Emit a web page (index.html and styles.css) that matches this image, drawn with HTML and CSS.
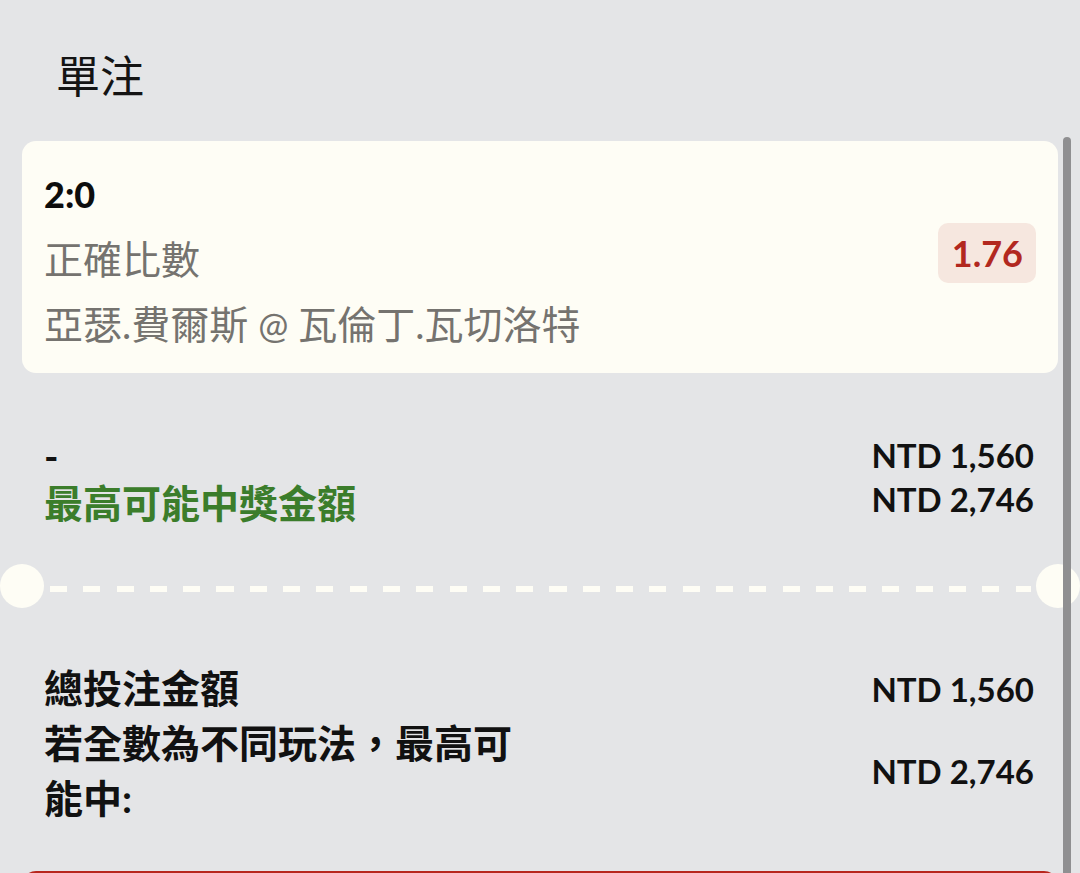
FILE: index.html
```html
<!DOCTYPE html>
<html lang="zh-Hant">
<head>
<meta charset="utf-8">
<title>單注</title>
<link rel="stylesheet" href="styles.css">
</head>
<body>
<div class="screen">
  <h1 class="title">單注</h1>

  <div class="card">
    <div class="info">
      <div class="score">2:0</div>
      <div class="market">正確比數</div>
      <div class="match">亞瑟.費爾斯 <span class="at">@</span> 瓦倫丁.瓦切洛特</div>
    </div>
    <div class="odds">1.76</div>
  </div>

  <div class="stake">
    <div class="stake-left">
      <div class="dash">-</div>
      <div class="win-label">最高可能中獎金額</div>
    </div>
    <div class="stake-right">
      <div class="amt-line">NTD 1,560</div>
      <div class="amt-line">NTD 2,746</div>
    </div>
  </div>

  <div class="divider">
    <span class="notch"></span>
    <span class="dashes"></span>
    <span class="notch"></span>
  </div>

  <div class="summary">
    <div class="row">
      <div class="label">總投注金額</div>
      <div class="amount">NTD 1,560</div>
    </div>
    <div class="row">
      <div class="label">若全數為不同玩法，最高可能中:</div>
      <div class="amount">NTD 2,746</div>
    </div>
  </div>

  <div class="submit"></div>

  <div class="scrollbar"></div>
</div>
</body>
</html>
```

FILE: styles.css
```css
html, body {
  margin: 0;
  padding: 0;
}

body {
  background: #e4e5e7;
  font-family: "Lato", "Noto Sans CJK TC", sans-serif;
  color: #111111;
  overflow: hidden;
}

.screen {
  position: relative;
  width: 1080px;
  height: 873px;
  overflow: hidden;
}

.title {
  margin: 0;
  padding: 48px 0 0 56px;
  font-size: 44px;
  line-height: 56px;
  font-weight: 400;
  color: #141414;
}

.card {
  margin: 37px 22px 0 22px;
  padding: 21px 22px 15px 22px;
  background: #fefdf5;
  border-radius: 14px;
  display: flex;
  justify-content: space-between;
  align-items: center;
}

.score {
  font-size: 36px;
  line-height: 65px;
  font-weight: 900;
  color: #0d0d0d;
}

.market,
.match {
  font-size: 39px;
  line-height: 65px;
  font-weight: 400;
  color: #75736f;
}

.match .at {
  font-size: 36px;
}

.odds {
  margin-bottom: 15px;
  padding: 0 13px 0 14px;
  height: 60px;
  line-height: 60px;
  font-size: 36px;
  font-weight: 700;
  color: #b2281f;
  background: #f6e7df;
  border-radius: 10px;
}

.stake {
  margin: 60px 46px 0 44px;
  display: flex;
  justify-content: space-between;
  align-items: flex-start;
}

.dash {
  font-size: 39px;
  line-height: 46px;
  font-weight: 700;
}

.win-label {
  font-size: 39px;
  line-height: 48px;
  font-weight: 700;
  color: #3b7d2b;
}

.amt-line {
  font-size: 33px;
  line-height: 44px;
  font-weight: 700;
  text-align: right;
  color: #111111;
}

.divider {
  margin-top: 37px;
  height: 44px;
  display: flex;
  align-items: center;
}

.notch {
  flex: 0 0 44px;
  height: 44px;
  border-radius: 50%;
  background: #fefdf5;
}

.dashes {
  flex: 1;
  height: 6px;
  margin: 5px 5px 0 6px;
  background: repeating-linear-gradient(to right, #fefdf5 0 17px, transparent 17px 33.3px);
}

.summary {
  margin: 53px 46px 0 44px;
}

.row {
  display: flex;
  justify-content: space-between;
  align-items: center;
}

.label {
  max-width: 494px;
  font-size: 39px;
  line-height: 55px;
  font-weight: 700;
  color: #111111;
}

.amount {
  font-size: 33px;
  line-height: 40px;
  font-weight: 700;
  color: #111111;
  white-space: nowrap;
}

.submit {
  margin: 45px 22px 0 22px;
  height: 60px;
  background: #b8261d;
  border-radius: 14px 14px 0 0;
}

.scrollbar {
  position: absolute;
  left: 1063px;
  top: 137px;
  width: 8px;
  bottom: 0;
  background: #8f8f91;
  border-radius: 4px 4px 0 0;
}
```
